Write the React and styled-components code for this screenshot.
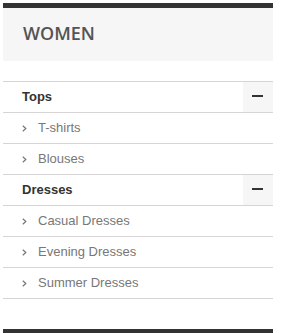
import React from 'react';
import styled, { createGlobalStyle } from 'styled-components';

const Global = createGlobalStyle`
  body { margin: 0; background: #fff; }
`;

const Page = styled.div`
  padding: 3px 13px 0 3px;
  width: 270px;
`;

const Block = styled.div`
  border-top: 5px solid #333;
`;

const Title = styled.h2`
  margin: 0;
  padding: 14px 20px 17px;
  background: #f6f6f6;
  font: 600 18px/22px "Open Sans", sans-serif;
  color: #555454;
  text-transform: uppercase;
`;

const Tree = styled.ul`
  list-style: none;
  margin: 20px 0 0;
  padding: 0;
  border-bottom: 1px solid #d6d4d4;
`;

const Row = styled.li`
  display: flex;
  align-items: center;
  height: 30px;
  border-top: 1px solid #d6d4d4;
  font: ${p => (p.$group ? 'bold' : 'normal')} 13px/30px "Liberation Sans", Arial, sans-serif;
  color: ${p => (p.$group ? '#333' : '#777')};
  padding-left: 19px;
`;

const Label = styled.span`
  flex: 1;
`;

const Arrow = styled.svg`
  width: 5px;
  height: 7px;
  margin-right: 11px;
  flex: none;
`;

const Toggle = styled.span`
  width: 30px;
  height: 30px;
  background: #f6f6f6;
  display: flex;
  align-items: center;
  justify-content: center;
  &::before {
    content: '';
    width: 11px;
    height: 2px;
    background: #333;
    margin-left: -1px;
    margin-top: -2px;
  }
`;

const NextBlock = styled.div`
  margin-top: 30px;
  border-top: 5px solid #333;
`;

const groups = [
  { name: 'Tops', items: ['T-shirts', 'Blouses'] },
  { name: 'Dresses', items: ['Casual Dresses', 'Evening Dresses', 'Summer Dresses'] },
];

export default function App() {
  return (
    <Page>
      <Global />
      <Block>
        <Title>Women</Title>
        <Tree>
          {groups.map(g => (
            <React.Fragment key={g.name}>
              <Row $group>
                <Label>{g.name}</Label>
                <Toggle />
              </Row>
              {g.items.map(it => (
                <Row key={it}>
                  <Arrow viewBox="0 0 5 7">
                    <polyline points="0.8,0.8 3.8,3.5 0.8,6.2" fill="none" stroke="#777" strokeWidth="1.2" />
                  </Arrow>
                  <Label>{it}</Label>
                </Row>
              ))}
            </React.Fragment>
          ))}
        </Tree>
      </Block>
      <NextBlock />
    </Page>
  );
}
